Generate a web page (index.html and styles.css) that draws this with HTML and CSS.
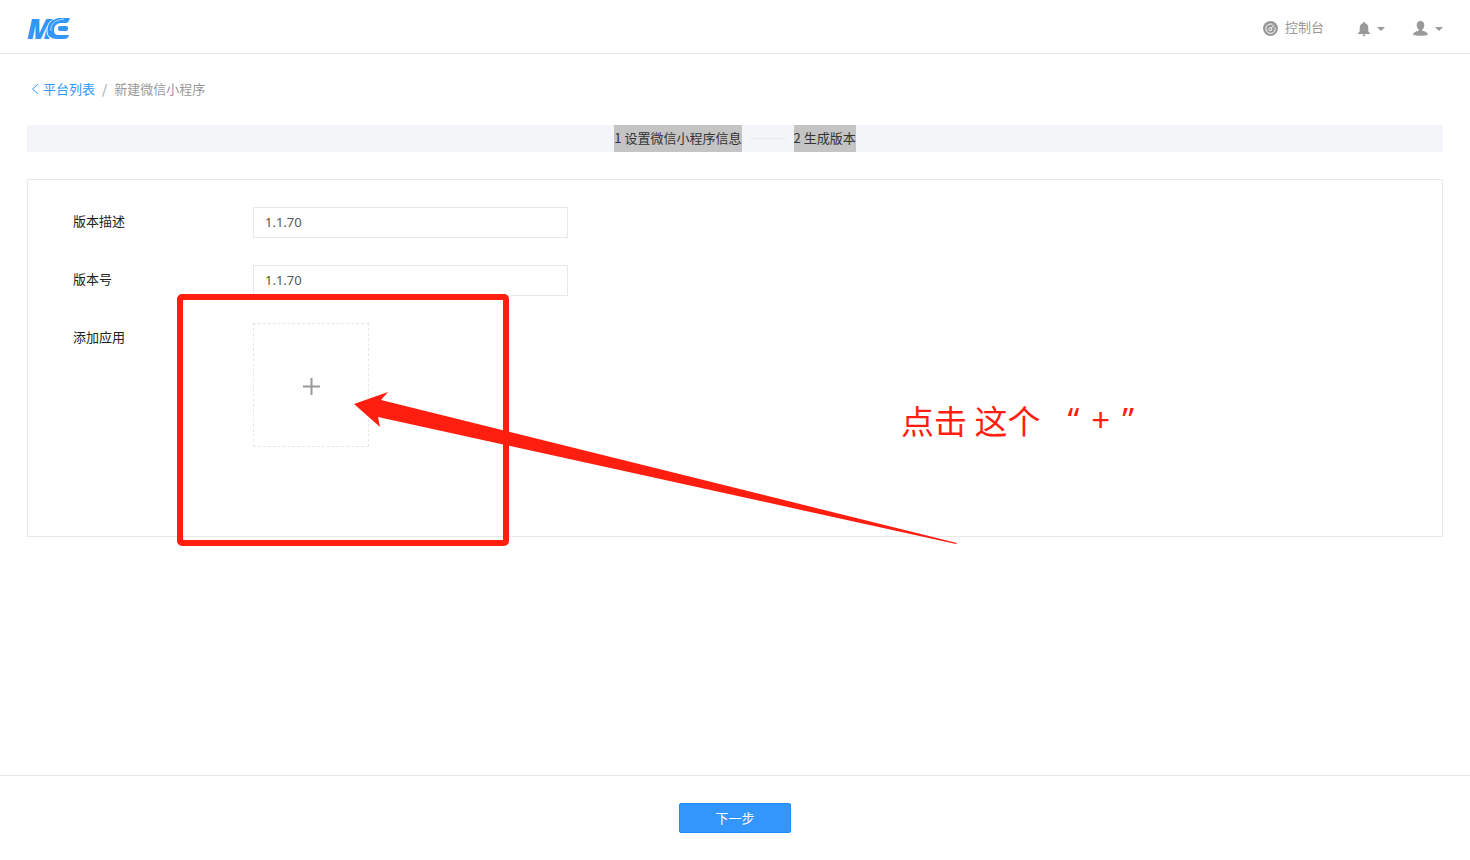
FILE: index.html
```html
<!DOCTYPE html>
<html lang="zh-CN">

<head>
  <meta charset="UTF-8" />
  <title>新建微信小程序</title>
  <meta name="viewport" content="width=device-width, initial-scale=1.0" />
  <link rel="stylesheet" href="styles.css">
</head>

<body>
  <header class="header">
    <a class="logo" href="#" aria-label="ME">
      <svg width="52" height="46" viewBox="-4 -12 52 46">
        <text class="logo-m" x="0" y="21">M</text>
        <path class="logo-cut" d="M30 0C23 2 20 7 20 12c0 4 1 7 4 9" />
        <path d="M43 0H31C24 2 21 7 21 12c0 6 3 9 9 9h7c3 0 4-1 5-4H32c-4 0-5-2-5-5 0-4 3-7 7-7h5c2 0 3-2 4-5z" />
        <rect x="31" y="8" width="10" height="5" rx="2" />
        <path class="logo-cut" d="M37 1C27 2 23 7 24 13" opacity=".6" />
      </svg>
    </a>
    <nav class="nav">
      <a class="nav-item" href="#">
        <svg width="15" height="15" viewBox="0 0 15 15">
          <circle cx="7.5" cy="7.5" r="7.5" fill="#999" />
          <path d="M9.500 3.400A4.700 4.700 0 1 0 12.100 6.500M8 7.500L11.200 4" fill="none" stroke="#fff" />
          <circle cx="7.3" cy="8.2" r="1.5" fill="#999" stroke="#fff" />
        </svg>
        <span class="nav-text">控制台</span>
      </a>
      <button class="nav-item" type="button" aria-label="消息">
        <svg width="12" height="14" viewBox="0 0 12 14">
          <path d="M6 0c.7 0 1 .5 1 1.200 2.300.5 3.300 2.300 3.300 4.600v3.600L12 11.200V12H0v-.8l1.700-1.800V5.800C1.700 3.500 2.700 1.700 5 1.200 5 .5 5.300 0 6 0zM4.500 12.500h3C7.500 13.500 7 14 6 14s-1.500-.5-1.500-1.500z" fill="#999" />
        </svg>
        <i class="caret"></i>
      </button>
      <button class="nav-item" type="button" aria-label="账户">
        <svg width="15" height="15" viewBox="0 0 15 15">
          <path d="M7.500 0C10 0 11.300 1.700 11.300 4.200 11.300 6 10.500 7.600 9.300 8.500v1.300c2.700.7 5.200 1.500 5.500 3.500.1 1-1 1.400-7.300 1.400S.1 14.300.2 13.300c.3-2 2.800-2.800 5.500-3.500V8.500C4.500 7.600 3.700 6 3.700 4.200 3.700 1.700 5 0 7.500 0z" fill="#999" />
        </svg>
        <i class="caret"></i>
      </button>
    </nav>
  </header>

  <main class="main">
    <div class="breadcrumb">
      <a href="#">
        <svg width="8" height="12" viewBox="0 0 8 12">
          <path d="M7 1L1.500 6L7 11" fill="none" stroke="#3296fa" />
        </svg>
        平台列表
      </a>
      <span>/</span>
      <span>新建微信小程序</span>
    </div>

    <div class="steps">
      <span class="step">1 设置微信小程序信息</span>
      <i class="step-line"></i>
      <span class="step">2 生成版本</span>
    </div>

    <form class="panel" id="version-form">
      <div class="row">
        <label for="inp-desc">版本描述</label>
        <input id="inp-desc" type="text" value="1.1.70" />
      </div>
      <div class="row">
        <label for="inp-version">版本号</label>
        <input id="inp-version" type="text" value="1.1.70" />
      </div>
      <div class="row">
        <label for="btn-add">添加应用</label>
        <button id="btn-add" class="add" type="button" aria-label="添加应用">
          <svg width="17" height="17" viewBox="0 0 17 17">
            <path d="M8.500 0v17M0 8.500h17" stroke="#999" stroke-width="2" />
          </svg>
        </button>
      </div>

      <!-- hint drawn over the form -->
      <svg class="hint-arrow" width="790" height="260" viewBox="0 0 790 260">
        <rect x="4" y="4" width="326" height="246" rx="2" />
        <path d="M178 111L212 99L205 107L781 250L780 251L202 124L204 134z" />
      </svg>
      <p class="hint-text">点击 这个 <span class="hint-plus"><span>“</span><span>+</span><span>”</span></span></p>
    </form>
  </main>

  <footer class="footer">
    <button class="btn-next" type="submit" form="version-form">下一步</button>
  </footer>
</body>

</html>
```
FILE: styles.css
```css
* {
  box-sizing: border-box;
}

body {
  margin: 0;
  min-height: 100vh;
  display: flex;
  flex-direction: column;
  background: #fff;
  font-family: 'Noto Sans CJK SC', sans-serif;
  font-size: 13px;
  line-height: 20px;
  color: #222;
}

a {
  color: #3296fa;
  text-decoration: none;
}

button,
input {
  font-family: inherit;
  font-size: 13px;
}

button {
  padding: 0;
  border: none;
  background: none;
  cursor: pointer;
}

svg {
  display: block;
}

.header {
  display: flex;
  align-items: center;
  justify-content: space-between;
  height: 54px;
  padding: 4px 27px 0 23px;
  border-bottom: 1px solid #e7e8eb;
}

.logo svg {
  fill: #3296fa;
}

.logo-m {
  font: italic 800 29px 'Open Sans', sans-serif;
}

.logo .logo-cut {
  fill: none;
  stroke: #fff;
}

.nav {
  display: flex;
  gap: 28px;
}

.nav-item {
  display: flex;
  align-items: center;
  gap: 7px;
  color: #999;
}

.nav-item:first-child {
  margin-right: 6px;
}

.nav-text {
  margin-bottom: 4px;
}

.caret {
  border: 4px solid transparent;
  border-top-color: #999;
  border-bottom: none;
}

.main {
  flex: 1;
  padding: 25px 27px;
}

.breadcrumb {
  display: flex;
  gap: 7px;
  padding-left: 4px;
  color: #999;
}

.breadcrumb a {
  display: flex;
  align-items: center;
  gap: 4px;
}

.steps {
  display: flex;
  align-items: center;
  justify-content: center;
  gap: 8px;
  margin: 26px 0 27px;
  background: #f4f5f9;
}

.step {
  height: 27px;
  line-height: 26px;
  background: #c4c4c4;
  color: #333;
}

.step-line {
  width: 36px;
  border-top: 1px solid #e7e8eb;
}

.panel {
  position: relative;
  min-height: 358px;
  padding: 27px 45px;
  border: 1px solid #e7e8eb;
}

.row {
  display: flex;
  align-items: flex-start;
  margin-bottom: 27px;
}

.row label {
  width: 180px;
  padding-top: 4px;
}

.row input {
  width: 315px;
  height: 31px;
  padding: 0 11px 2px;
  border: 1px solid #e7e8eb;
  font-family: 'Noto Sans', sans-serif;
  color: #555;
}

.add {
  display: flex;
  align-items: center;
  justify-content: center;
  width: 116px;
  height: 124px;
  padding-top: 2px;
  border: 1px dashed #e7e8eb;
}

.hint-arrow {
  position: absolute;
  top: 113px;
  left: 148px;
  fill: #ff1e10;
  pointer-events: none;
}

.hint-arrow rect {
  fill: none;
  stroke: #ff1e10;
  stroke-width: 6px;
}

.hint-text {
  position: absolute;
  top: 216px;
  left: 873px;
  display: flex;
  gap: 27px;
  margin: 0;
  font-size: 33px;
  line-height: 48px;
  white-space: nowrap;
  color: #ff1e10;
}

.hint-plus {
  display: flex;
  gap: 12px;
  font-family: 'Noto Sans', sans-serif;
}

.footer {
  display: flex;
  justify-content: center;
  padding: 27px;
  border-top: 1px solid #e7e8eb;
}

.btn-next {
  width: 112px;
  height: 30px;
  padding-bottom: 2px;
  border: 1px solid #1e8aff;
  border-radius: 2px;
  background: #3296fa;
  color: #fff;
}
```
